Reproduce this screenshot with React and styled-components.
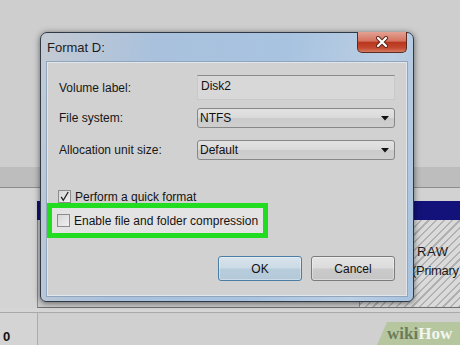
import React from "react";
import styled, { createGlobalStyle } from "styled-components";

const GlobalStyle = createGlobalStyle`
  html, body {
    margin: 0;
    padding: 0;
  }
  body {
    width: 460px;
    height: 345px;
    overflow: hidden;
    background: #cfcfcf;
    font-family: "Liberation Sans", Arial, sans-serif;
  }
`;

const Screen = styled.div`
  position: relative;
  width: 460px;
  height: 345px;
  overflow: hidden;
  display: flex;
  flex-direction: column;
  background: #cfcfcf;
`;

const TopArea = styled.div`
  height: 167px;
  background: #cecece;
`;

const Band = styled.div`
  height: 20px;
  background: #bdbdbd;
  border-bottom: 1px solid #8d8d8d;
`;

const DiskRow = styled.div`
  display: flex;
  height: 120px;
`;

const LabelCol = styled.div`
  width: 37px;
  flex-shrink: 0;
  background: #d4d4d4;
  font-size: 13px;
  font-weight: bold;
  color: #111;
  padding: ${(p) => p.$pad || "0"};
  box-sizing: border-box;
`;

const DiskArea = styled.div`
  flex: 1;
  display: flex;
  flex-direction: column;
  padding-top: 13px;
  background: #d2d2d2;
`;

const NavyBar = styled.div`
  height: 19px;
  background: #12127a;
`;

const Partitions = styled.div`
  flex: 1;
  display: flex;
`;

const Partition = styled.div`
  flex: ${(p) => (p.$hatched ? "0 0 100px" : "1")};
  border-bottom: 1px solid #6f6f6f;
  border-left: 1px solid #8a8a8a;
  background: ${(p) =>
    p.$hatched
      ? "repeating-linear-gradient(135deg, #dadada 0 4px, #b1b1b1 4px 5.5px)"
      : "#cbcbcb"};
  padding-top: 22px;
  font-size: 13px;
  line-height: 19px;
  color: #1a1a1a;
  overflow: hidden;
  white-space: nowrap;
`;

const PartLine = styled.div`
  padding-left: ${(p) => p.$indent}px;
  letter-spacing: ${(p) => p.$spacing || 0}px;
`;

const GapStrip = styled.div`
  height: 4px;
  background: #d6d6d6;
  border-bottom: 1px solid #a9a9a9;
`;

const BottomRow = styled.div`
  flex: 1;
  display: flex;
  background: #d0d0d0;
`;

const BottomRest = styled.div`
  flex: 1;
  border-left: 1px solid #acacac;
`;

/* ---------- dialog (a window over the desktop) ---------- */

const Dialog = styled.div`
  position: absolute;
  left: 40px;
  top: 32px;
  width: 374px;
  height: 270px;
  box-sizing: border-box;
  border: 1px solid #2f3a46;
  border-radius: 7px 7px 6px 6px;
  background: linear-gradient(
    100deg,
    #c4cad2 0%,
    #a9c1dd 28%,
    #a8c3e0 60%,
    #bccfe3 85%,
    #a6c2de 100%
  );
  box-shadow: 0 1px 6px rgba(0, 0, 0, 0.55);
  padding: 0 6px 5px 6px;
  display: flex;
  flex-direction: column;
`;

const TitleBar = styled.div`
  height: 29px;
  display: flex;
  justify-content: space-between;
  align-items: flex-start;
`;

const Title = styled.div`
  font-size: 13px;
  line-height: 16px;
  padding-top: 7px;
  color: #1c1c1c;
`;

const CloseButton = styled.div`
  width: 50px;
  height: 21px;
  margin-top: -1px;
  box-sizing: border-box;
  border: 1px solid #5e2b20;
  border-top: none;
  border-radius: 0 0 5px 5px;
  background: linear-gradient(
    #e3a293 0%,
    #d4735f 45%,
    #b9361f 52%,
    #c4492f 80%,
    #d57c63 100%
  );
  display: flex;
  align-items: center;
  justify-content: center;
`;

const Client = styled.div`
  flex: 1;
  border: 1px solid #e1e6ec;
  box-shadow: 0 0 0 1px #91a6bd;
  background: #d1d1d1;
  padding: 12px 11px 14px 11px;
  display: flex;
  flex-direction: column;
`;

const FieldRow = styled.div`
  display: grid;
  grid-template-columns: 138px 1fr;
  align-items: center;
  margin-bottom: ${(p) => p.$gap || 0}px;
`;

const Label = styled.div`
  font-size: 12px;
  color: #161616;
`;

const TextBox = styled.div`
  height: 25px;
  box-sizing: border-box;
  border: 1px solid #c9c9c9;
  border-top-color: #8b8b8b;
  background: #d8d8d8;
  font-size: 12px;
  line-height: 15px;
  padding: 3px 3px;
  color: #111;
`;

const Select = styled.div`
  height: 20px;
  box-sizing: border-box;
  border: 1px solid #878787;
  border-radius: 3px;
  background: linear-gradient(#e2e2e2 0%, #dadada 48%, #cbcbcb 52%, #cfcfcf 100%);
  display: flex;
  align-items: center;
  justify-content: space-between;
  padding: 0 5px 0 2px;
  font-size: 12px;
  color: #111;
`;

const CheckRow = styled.div`
  display: flex;
  align-items: center;
  gap: 4px;
  height: 13px;
  margin-left: -1px;
  font-size: 12px;
  color: #141414;
`;

const Highlight = styled.div`
  margin-left: -12px;
  width: 221px;
  box-sizing: border-box;
  border: 5px solid #22dc22;
  background: #e3e3e3;
  padding: 6px 0 6px 6px;
`;

const Box = styled.div`
  width: 13px;
  height: 13px;
  box-sizing: border-box;
  border: 1px solid #8c8c8c;
  background: linear-gradient(135deg, #d6d6d6, #f0f0f0);
  display: flex;
  align-items: center;
  justify-content: center;
`;

const Spacer = styled.div`
  height: ${(p) => p.$h}px;
  flex-shrink: 0;
`;

const ButtonRow = styled.div`
  display: flex;
  justify-content: flex-end;
  gap: 9px;
  margin-top: 18px;
`;

const Button = styled.div`
  width: 84px;
  height: 25px;
  box-sizing: border-box;
  border-radius: 3px;
  border: 1px solid ${(p) => (p.$primary ? "#4a7ea5" : "#7b7b7b")};
  background: ${(p) =>
    p.$primary
      ? "linear-gradient(#d8e4ec 0%, #cbdae5 48%, #b8cddc 52%, #b3c9d9 100%)"
      : "linear-gradient(#e4e4e4 0%, #dbdbdb 48%, #cacaca 52%, #c6c6c6 100%)"};
  box-shadow: inset 0 0 0 1px rgba(255, 255, 255, 0.35);
  display: flex;
  align-items: center;
  justify-content: center;
  font-size: 12px;
  color: #111;
`;

/* ---------- watermark ---------- */

const Logo = styled.div`
  position: absolute;
  right: 0;
  bottom: 0;
  width: 83px;
  height: 23px;
  background: #b6c7a0;
  clip-path: polygon(10px 0, 100% 0, 100% 100%, 0 100%);
  padding-left: 10px;
  box-sizing: border-box;
  font-family: "Liberation Serif", "Times New Roman", serif;
  font-weight: bold;
  font-size: 17px;
  line-height: 24px;
  white-space: nowrap;
`;

const Wiki = styled.span`
  color: #6b7c5a;
`;

const How = styled.span`
  color: #f3f5ef;
`;

function Check() {
  return (
    <svg width="11" height="11" viewBox="0 0 11 11">
      <path d="M2.2 5.8 L4.3 9.3 L9.2 1" fill="none" stroke="#222" strokeWidth="1.3" />
    </svg>
  );
}

function Arrow() {
  return (
    <svg width="8" height="5" viewBox="0 0 8 5">
      <path d="M0 0 H8 L4 4.5 Z" fill="#111" />
    </svg>
  );
}

function CloseX() {
  return (
    <svg width="14" height="12" viewBox="0 0 14 12">
      <path d="M3 2 L11 10 M11 2 L3 10" stroke="#5a2418" strokeWidth="4" strokeLinecap="round" />
      <path d="M3 2 L11 10 M11 2 L3 10" stroke="#fff" strokeWidth="2.2" strokeLinecap="round" />
    </svg>
  );
}

export default function App() {
  return (
    <Screen>
      <GlobalStyle />
      <TopArea />
      <Band />
      <DiskRow>
        <LabelCol />
        <DiskArea>
          <NavyBar />
          <Partitions>
            <Partition />
            <Partition $hatched>
              <PartLine $indent={57} $spacing={0.6}>RAW</PartLine>
              <PartLine $indent={52} $spacing={-0.3}>(Primary</PartLine>
            </Partition>
          </Partitions>
        </DiskArea>
      </DiskRow>
      <GapStrip />
      <BottomRow>
        <LabelCol $pad="16px 0 0 3px">0</LabelCol>
        <BottomRest />
      </BottomRow>

      <Dialog>
        <TitleBar>
          <Title>Format D:</Title>
          <CloseButton>
            <CloseX />
          </CloseButton>
        </TitleBar>
        <Client>
          <FieldRow $gap={8}>
            <Label>Volume label:</Label>
            <TextBox>Disk2</TextBox>
          </FieldRow>
          <FieldRow $gap={12}>
            <Label>File system:</Label>
            <Select>
              NTFS
              <Arrow />
            </Select>
          </FieldRow>
          <FieldRow>
            <Label>Allocation unit size:</Label>
            <Select>
              Default
              <Arrow />
            </Select>
          </FieldRow>
          <Spacer $h={30} />
          <CheckRow>
            <Box>
              <Check />
            </Box>
            Perform a quick format
          </CheckRow>
          <Highlight>
            <CheckRow>
              <Box />
              Enable file and folder compression
            </CheckRow>
          </Highlight>
          <ButtonRow>
            <Button $primary>OK</Button>
            <Button>Cancel</Button>
          </ButtonRow>
        </Client>
      </Dialog>

      <Logo>
        <Wiki>wiki</Wiki>
        <How>How</How>
      </Logo>
    </Screen>
  );
}
